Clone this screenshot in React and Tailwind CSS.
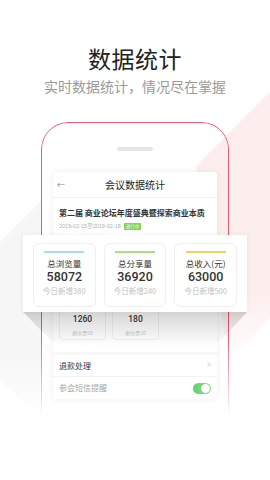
import React from 'react'

const font = { fontFamily: '"Noto Sans CJK SC", "Noto Sans", sans-serif' }
const latin = { fontFamily: '"Liberation Sans", "Noto Sans CJK SC", sans-serif' }
const digits = { fontFamily: 'Roboto, "Liberation Sans", sans-serif' }

const stats = [
  { label: '总浏览量', value: '58072', today: '今日新增380', bar: 'bg-[#a9d9f7]' },
  { label: '总分享量', value: '36920', today: '今日新增240', bar: 'bg-[#a8e27c]' },
  { label: '总收入(元)', value: '63000', today: '今日新增500', bar: 'bg-[#f1d05c]' },
]

const tickets = [
  { value: '1260', left: '剩余票50' },
  { value: '180', left: '剩余票10' },
]

function Backdrop() {
  return (
    <svg className="absolute inset-0" width="270" height="480" viewBox="0 0 270 480">
      <defs>
        <linearGradient id="pinkFade" x1="0" y1="0" x2="0" y2="1">
          <stop offset="0" stopColor="#fdeeee" />
          <stop offset="0.75" stopColor="#fdeeee" />
          <stop offset="1" stopColor="#fdeeee" stopOpacity="0" />
        </linearGradient>
        <linearGradient id="grayFade" x1="0" y1="0" x2="0" y2="1">
          <stop offset="0" stopColor="#f6f6f6" />
          <stop offset="0.7" stopColor="#f6f6f6" />
          <stop offset="1" stopColor="#f6f6f6" stopOpacity="0" />
        </linearGradient>
      </defs>
      <polygon points="270,92 196,166 229,362 270,318" fill="url(#pinkFade)" />
      <polygon points="0,242 42,200 42,420 0,380" fill="url(#grayFade)" />
    </svg>
  )
}

export default function App() {
  return (
    <div className="relative w-[270px] h-[480px] overflow-hidden bg-white" style={font}>
      <Backdrop />

      <div className="relative flex flex-col items-center pt-[44px]">
        <h1 className="text-[23px] leading-[28px] text-[#222] font-normal tracking-[0.5px]">数据统计</h1>
        <p className="mt-[5px] text-[14px] leading-[18px] text-[#9a9a9a]">实时数据统计，情况尽在掌握</p>

        {/* phone */}
        <div className="relative mt-[27px] w-[188px] pt-[25px] pb-[18px]">
          <div className="absolute inset-0 rounded-t-[27px] border-[1.5px] border-b-0 border-[#f5566c] [mask-image:linear-gradient(to_bottom,black_72%,transparent)]" />
          <div className="relative mx-auto w-[36px] h-[4px] rounded-full bg-[#e6e6e6]" />

          <div className="relative mx-[12px] mt-[21px] bg-white rounded-t-[3px] shadow-[0_0_6px_rgba(0,0,0,0.07)]">
            <div className="relative flex items-center justify-center h-[26px] border-b border-[#f0f0f0]">
              <span className="absolute left-[4px] text-[8px] text-[#888]">←</span>
              <span className="text-[10px] text-[#222]">会议数据统计</span>
            </div>

            <div className="px-[6px] pt-[9px] h-[37px]">
              <p className="text-[8px] leading-[11px] font-bold text-[#333] whitespace-nowrap">第二届 商业论坛年度盛典暨探索商业本质</p>
              <div className="mt-[4px] flex items-center gap-[3px]">
                <span className="text-[5.5px] leading-[8px] text-[#b0b0b0]" style={latin}>2019-02-15至2019-02-18</span>
                <span className="px-[2px] text-[4.5px] leading-[7px] text-white bg-[#86d24a] rounded-[1px]">进行中</span>
              </div>
            </div>

            {/* floating stats card */}
            <div className="relative z-10 -mx-[30px]">
              <div className="bg-white px-[10px] pt-[8px] pb-[5px] grid grid-cols-3 gap-[8px] shadow-[0_0_6px_rgba(0,0,0,0.06)]">
                {stats.map(s => (
                  <div key={s.label} className="h-[64px] flex flex-col items-center border border-[#efefef] rounded-[6px]">
                    <div className={`mt-[7px] w-[40px] h-[2px] ${s.bar}`} />
                    <div className="mt-[4px] text-[8.5px] leading-[12px] text-[#333]">{s.label}</div>
                    <div className="mt-[1px] text-[12.5px] leading-[14px] font-medium text-[#333]" style={digits}>{s.value}</div>
                    <div className="mt-[2px] text-[7.5px] leading-[10px] text-[#c2c2c2]">{s.today}</div>
                  </div>
                ))}
              </div>
              <div className="absolute top-full left-0 right-0 h-[34px] bg-gradient-to-b from-[rgba(0,0,0,0.16)] to-[rgba(0,0,0,0)] [clip-path:polygon(0_0,100%_0,86%_100%,15%_100%)]" />
            </div>

            <div className="flex gap-[6px] px-[6px]">
              {tickets.map(t => (
                <div key={t.value} className="w-[47px] h-[28px] flex flex-col items-center border-x border-b border-[#f0f0f0] rounded-b-[5px]">
                  <div className="mt-[2px] text-[8.5px] leading-[10px] font-medium text-[#333]" style={digits}>{t.value}</div>
                  <div className="mt-[5px] text-[5px] leading-[7px] text-[#c8c8c8]">{t.left}</div>
                </div>
              ))}
            </div>

            <div className="mt-[12px] h-[3px] bg-[#f7f7f7]" />
            <div className="flex items-center justify-between h-[22px] px-[6px] border-b border-[#f3f3f3]">
              <span className="text-[8px] text-[#333]">退款处理</span>
              <span className="text-[7px] text-[#c4c4c4]" style={latin}>&gt;</span>
            </div>
            <div className="flex items-center justify-between h-[22px] px-[6px]">
              <span className="text-[8px] text-[#a8a8a8]">参会短信提醒</span>
              <div className="relative w-[18px] h-[11px] rounded-full bg-gradient-to-r from-[#5cd06a] to-[#9be38f]">
                <div className="absolute right-[1px] top-[1px] w-[9px] h-[9px] rounded-full bg-white shadow-[0_0_1px_rgba(0,0,0,0.3)]" />
              </div>
            </div>
          </div>
        </div>
      </div>
    </div>
  )
}
